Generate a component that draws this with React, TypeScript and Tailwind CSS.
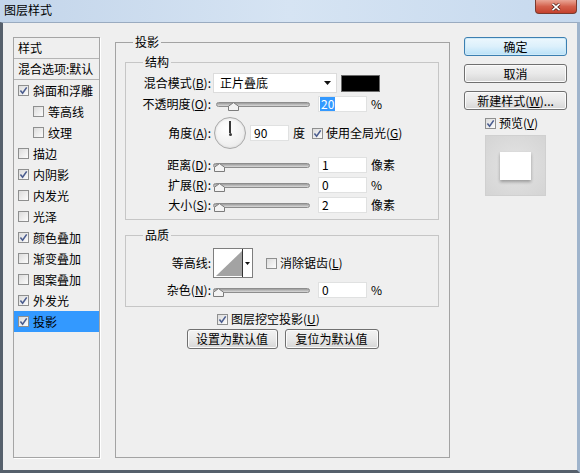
import clsx from "clsx"
import type { ReactNode } from "react"

// Photoshop 图层样式 dialog (投影 tab)

const Check = ({ on }: { on?: boolean }) => (
  <span className="flex h-[11px] w-[11px] shrink-0 items-center justify-center border border-[#8e8f8f] bg-gradient-to-br from-[#dcdcdc] to-[#fcfcfc]">
    {on && (
      <svg width="9" height="9" viewBox="0 0 9 9">
        <path d="M1.4 4.6 L3.6 7.2 L7.7 1.4" fill="none" stroke="#4b5d8f" strokeWidth="1.6" />
      </svg>
    )}
  </span>
)

const Slider = ({ className, at }: { className: string; at: number }) => (
  <div className={clsx("relative flex h-[20px] shrink-0 items-center", className)}>
    <div className="h-[5px] w-full rounded-full border border-[#8d8d8d] bg-gradient-to-b from-[#9c9c9c] to-[#dadada]" />
    <svg className="absolute top-[8px]" style={{ left: at }} width="11" height="9" viewBox="0 0 11 9">
      <path d="M0.5 8.5 V4.2 L5.5 0.6 L10.5 4.2 V8.5 Z" fill="#f3f3f3" stroke="#7b7b7b" />
    </svg>
  </div>
)

const Field = ({ className, children }: { className?: string; children: ReactNode }) => (
  <div className={clsx("flex h-[16px] shrink-0 items-center border border-[#e0e1e1] bg-white pl-[3px]", className)}>
    {children}
  </div>
)

const Btn = ({ className, primary, children }: { className?: string; primary?: boolean; children: ReactNode }) => (
  <div
    className={clsx(
      "flex shrink-0 items-center justify-center rounded-[3px] border",
      primary
        ? "border-[#3c7fb1] bg-gradient-to-b from-[#ecf7fd] via-[#dcf0fb] to-[#b9e1f8] shadow-[inset_0_0_0_1px_#cfeaf8]"
        : "border-[#707070] bg-gradient-to-b from-[#f3f3f3] via-[#e9e9e9] to-[#d6d6d6] shadow-[inset_0_0_0_1px_#fbfbfb]",
      className
    )}
  >
    {children}
  </div>
)

const Label = ({ t, k }: { t: string; k: string }) => (
  <span className="w-[85px] shrink-0 text-right">
    {t}(<span className="underline">{k}</span>):
  </span>
)

const effects = [
  { t: "斜面和浮雕", on: true },
  { t: "等高线", sub: true },
  { t: "纹理", sub: true },
  { t: "描边" },
  { t: "内阴影", on: true },
  { t: "内发光" },
  { t: "光泽" },
  { t: "颜色叠加", on: true },
  { t: "渐变叠加" },
  { t: "图案叠加" },
  { t: "外发光", on: true },
  { t: "投影", on: true, sel: true },
]

export default function App() {
  return (
    <div className="flex h-[473px] w-[580px] flex-col overflow-hidden bg-gradient-to-r from-[#c3d5ea] via-[#d6e4f3] to-[#c6d9ee] font-['Noto_Sans_CJK_SC',sans-serif] text-[12px] leading-none text-black">
      {/* title bar */}
      <div className="flex h-[22px] shrink-0 items-start">
        <span className="ml-[4px] mt-[4px] text-[12px]">图层样式</span>
        <div className="ml-auto mr-[3px] flex h-[14px] w-[42px] items-center justify-center rounded-b-[4px] border border-t-0 border-[#7a3a2e] bg-gradient-to-b from-[#e9a596] via-[#d3604c] to-[#c4402c]">
          <svg width="10" height="8" viewBox="0 0 10 8">
            <path d="M1.5 0.8 L8.5 7.2 M8.5 0.8 L1.5 7.2" stroke="#4a1a12" strokeWidth="3" />
            <path d="M1.5 0.8 L8.5 7.2 M8.5 0.8 L1.5 7.2" stroke="#ffffff" strokeWidth="1.6" />
          </svg>
        </div>
      </div>

      {/* client area */}
      <div className="flex min-h-0 flex-1 items-start border-b-[3px] border-l-[3px] border-r-[3px] border-t border-b-[#56606c] border-l-[#56606c] border-r-[#9fb4cc] border-t-[#9aabc0] bg-[#efefef]">
        {/* effect list */}
        <div className="ml-[10px] mt-[14px] flex h-[421px] w-[87px] shrink-0 flex-col border border-[#a5a5a5] shadow-[1px_1px_0_#ffffff]">
          <div className="flex h-[21px] items-center border-b border-[#b4b4b4] pl-[4px]">样式</div>
          <div className="flex h-[21px] items-center border-b border-[#b4b4b4] pl-[4px]">混合选项:默认</div>
          {effects.map((e) => (
            <div
              key={e.t}
              className={clsx("flex h-[21px] items-center", e.sub ? "pl-[19px]" : "pl-[4px]", e.sel && "bg-[#3399ff]")}
            >
              <Check on={e.on} />
              <span className="ml-[4px]">{e.t}</span>
            </div>
          ))}
        </div>

        {/* 投影 */}
        <fieldset className="ml-[15px] mt-[11px] h-[424px] w-[335px] shrink-0 border border-[#a3a3a3]">
          <legend className="ml-[17px] px-[2px] leading-[16px]">投影</legend>

          <fieldset className="ml-[9px] mt-[4px] w-[314px] border border-[#c6c6c6] pb-[4px]">
            <legend className="ml-[17px] px-[2px] leading-[16px]">结构</legend>

            <div className="mt-[3px] flex h-[20px] items-center">
              <Label t="混合模式" k="B" />
              <div className="ml-[2px] flex h-[20px] w-[124px] items-center border border-[#dcdcdc] bg-white pl-[6px]">
                正片叠底
                <svg className="ml-auto mr-[5px]" width="7" height="4" viewBox="0 0 7 4">
                  <path d="M0 0 H7 L3.5 4 Z" fill="#111" />
                </svg>
              </div>
              <div className="ml-[4px] h-[17px] w-[39px] border border-[#6b6b6b] bg-black" />
            </div>

            <div className="mt-[1px] flex h-[20px] items-center">
              <Label t="不透明度" k="O" />
              <Slider className="ml-[5px] w-[94px]" at={12} />
              <Field className="ml-[8px] w-[49px] !pl-[1px]">
                <span className="bg-[#3399ff] px-[1px] py-[1px] text-white">20</span>
              </Field>
              <span className="ml-[4px]">%</span>
            </div>

            <div className="mt-[2px] flex h-[34px] items-center">
              <Label t="角度" k="A" />
              <div className="relative ml-[3px] flex h-[32px] w-[32px] shrink-0 flex-col items-center rounded-full border border-[#a9a9a9] bg-[radial-gradient(circle_at_40%_35%,#ffffff,#e6e6e6)] shadow-[inset_0_0_2px_#cfcfcf]">
                <div className="mt-[3px] h-[12px] w-[2px] bg-[#3a3a3a]" />
                <div className="h-[3px] w-[3px] rounded-full bg-[#3a3a3a]" />
              </div>
              <Field className="ml-[4px] w-[39px]">90</Field>
              <span className="ml-[4px]">度</span>
              <span className="ml-[7px]">
                <Check on />
              </span>
              <span className="ml-[3px]">
                使用全局光(<span className="underline">G</span>)
              </span>
            </div>

            <div className="mt-[5px] flex h-[20px] items-center">
              <Label t="距离" k="D" />
              <Slider className="ml-[2px] w-[97px]" at={1} />
              <Field className="ml-[8px] w-[49px]">1</Field>
              <span className="ml-[4px]">像素</span>
            </div>
            <div className="flex h-[20px] items-center">
              <Label t="扩展" k="R" />
              <Slider className="ml-[2px] w-[97px]" at={1} />
              <Field className="ml-[8px] w-[49px]">0</Field>
              <span className="ml-[4px]">%</span>
            </div>
            <div className="flex h-[20px] items-center">
              <Label t="大小" k="S" />
              <Slider className="ml-[2px] w-[97px]" at={1} />
              <Field className="ml-[8px] w-[49px]">2</Field>
              <span className="ml-[4px]">像素</span>
            </div>
          </fieldset>

          <fieldset className="ml-[9px] mt-[7px] w-[314px] border border-[#c6c6c6] pb-[6px]">
            <legend className="ml-[17px] px-[2px] leading-[16px]">品质</legend>

            <div className="mt-[5px] flex h-[30px] items-center">
              <span className="w-[85px] shrink-0 text-right">等高线:</span>
              <div className="ml-[2px] flex h-[30px] w-[40px] shrink-0 border border-[#7e7e7e] bg-white">
                <svg className="mt-[2px] ml-[2px]" width="26" height="25" viewBox="0 0 26 25">
                  <path d="M0 25 L26 0 V25 Z" fill="#a3a3a3" />
                </svg>
                <div className="ml-auto flex w-[10px] items-center justify-center border-l border-[#333]">
                  <svg width="5" height="3" viewBox="0 0 5 3">
                    <path d="M0 0 H5 L2.5 3 Z" fill="#111" />
                  </svg>
                </div>
              </div>
              <span className="ml-[13px]">
                <Check />
              </span>
              <span className="ml-[3px]">
                消除锯齿(<span className="underline">L</span>)
              </span>
            </div>

            <div className="mt-[2px] flex h-[20px] items-center">
              <Label t="杂色" k="N" />
              <Slider className="ml-[2px] w-[97px]" at={0} />
              <Field className="ml-[8px] w-[49px]">0</Field>
              <span className="ml-[4px]">%</span>
            </div>
          </fieldset>

          <div className="mt-[2px] flex h-[20px] items-center pl-[101px]">
            <Check on />
            <span className="ml-[3px]">
              图层挖空投影(<span className="underline">U</span>)
            </span>
          </div>
          <div className="flex justify-center gap-[7px]">
            <Btn className="h-[20px] w-[91px]">设置为默认值</Btn>
            <Btn className="h-[20px] w-[94px]">复位为默认值</Btn>
          </div>
        </fieldset>

        {/* buttons & preview */}
        <div className="ml-[14px] mt-[14px] flex w-[103px] shrink-0 flex-col">
          <Btn primary className="h-[19px]">确定</Btn>
          <Btn className="mt-[8px] h-[19px]">取消</Btn>
          <Btn className="mt-[8px] h-[19px]">
            新建样式(<span className="underline">W</span>)...
          </Btn>
          <div className="mt-[4px] flex h-[18px] items-center pl-[21px]">
            <Check on />
            <span className="ml-[3px]">
              预览(<span className="underline">V</span>)
            </span>
          </div>
          <div className="ml-[21px] mt-[3px] flex h-[61px] w-[61px] items-center justify-center border border-[#d0d0d0] bg-[radial-gradient(circle,#e4e4e4,#d4d4d4)]">
            <div className="h-[28px] w-[31px] bg-white shadow-[0_2px_3px_rgba(0,0,0,0.3)]" />
          </div>
        </div>
      </div>
    </div>
  )
}
